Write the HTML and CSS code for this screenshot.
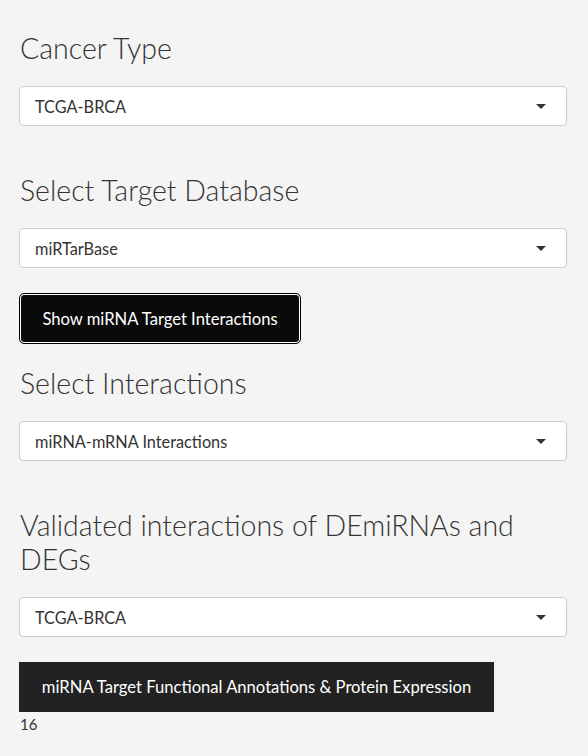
FILE: index.html
```html
<!DOCTYPE html>
<html>
<head>
<meta charset="utf-8">
<link rel="stylesheet" href="styles.css">
</head>
<body>
<div class="panel">
  <h3 class="label first">Cancer Type</h3>
  <div class="select"><span>TCGA-BRCA</span><i class="caret"></i></div>

  <h3 class="label gap">Select Target Database</h3>
  <div class="select"><span>miRTarBase</span><i class="caret"></i></div>

  <button class="btn btn-focus">Show miRNA Target Interactions</button>

  <h3 class="label after-btn">Select Interactions</h3>
  <div class="select"><span>miRNA-mRNA Interactions</span><i class="caret"></i></div>

  <h3 class="label gap">Validated interactions of DEmiRNAs and DEGs</h3>
  <div class="select"><span>TCGA-BRCA</span><i class="caret"></i></div>

  <button class="btn btn-dark">miRNA Target Functional Annotations &amp; Protein Expression</button>
  <div class="count">16</div>
</div>
</body>
</html>
```
FILE: styles.css
```css
html, body {
  margin: 0;
  padding: 0;
  background: #f4f4f4;
}
body {
  font-family: Lato, "Open Sans", sans-serif;
  color: #333;
}
.panel {
  display: flex;
  flex-direction: column;
  align-items: flex-start;
  padding: 0 21px 0 19px;
}
.label {
  margin: 0 0 21px 1px;
  font-size: 28.5px;
  line-height: 34px;
  font-weight: 300;
  color: #333;
  width: 545px;
}
.label.first { margin-top: 31px; }
.label.gap { margin-top: 47px; }
.label.after-btn { margin-top: 23px; }
.select {
  align-self: stretch;
  box-sizing: border-box;
  height: 40px;
  background: #fff;
  border: 1px solid #ccc;
  border-radius: 4px;
  display: flex;
  align-items: center;
  justify-content: space-between;
  padding: 0 20px 0 15px;
  font-size: 16.3px;
  color: #333;
}
.caret {
  width: 0;
  height: 0;
  border-left: 5px solid transparent;
  border-right: 5px solid transparent;
  border-top: 5px solid #333;
  margin-top: 1px;
}
.btn {
  font-family: Lato, "Open Sans", sans-serif;
  font-size: 16.6px;
  color: #fff;
  cursor: pointer;
}
.btn-focus {
  margin-top: 26px;
  margin-left: 1px;
  box-sizing: border-box;
  width: 280px;
  height: 49px;
  background: #0a0a0a;
  border: 1px solid #fff;
  border-radius: 4px;
  outline: 1px solid #000;
  padding: 0;
}
.btn-dark {
  margin-top: 25px;
  box-sizing: border-box;
  width: 475px;
  height: 50px;
  background: #222;
  border: none;
  border-radius: 0;
  padding: 0;
}
.count {
  font-size: 15px;
  line-height: 24px;
  margin-left: 1px;
  color: #333;
}
```
